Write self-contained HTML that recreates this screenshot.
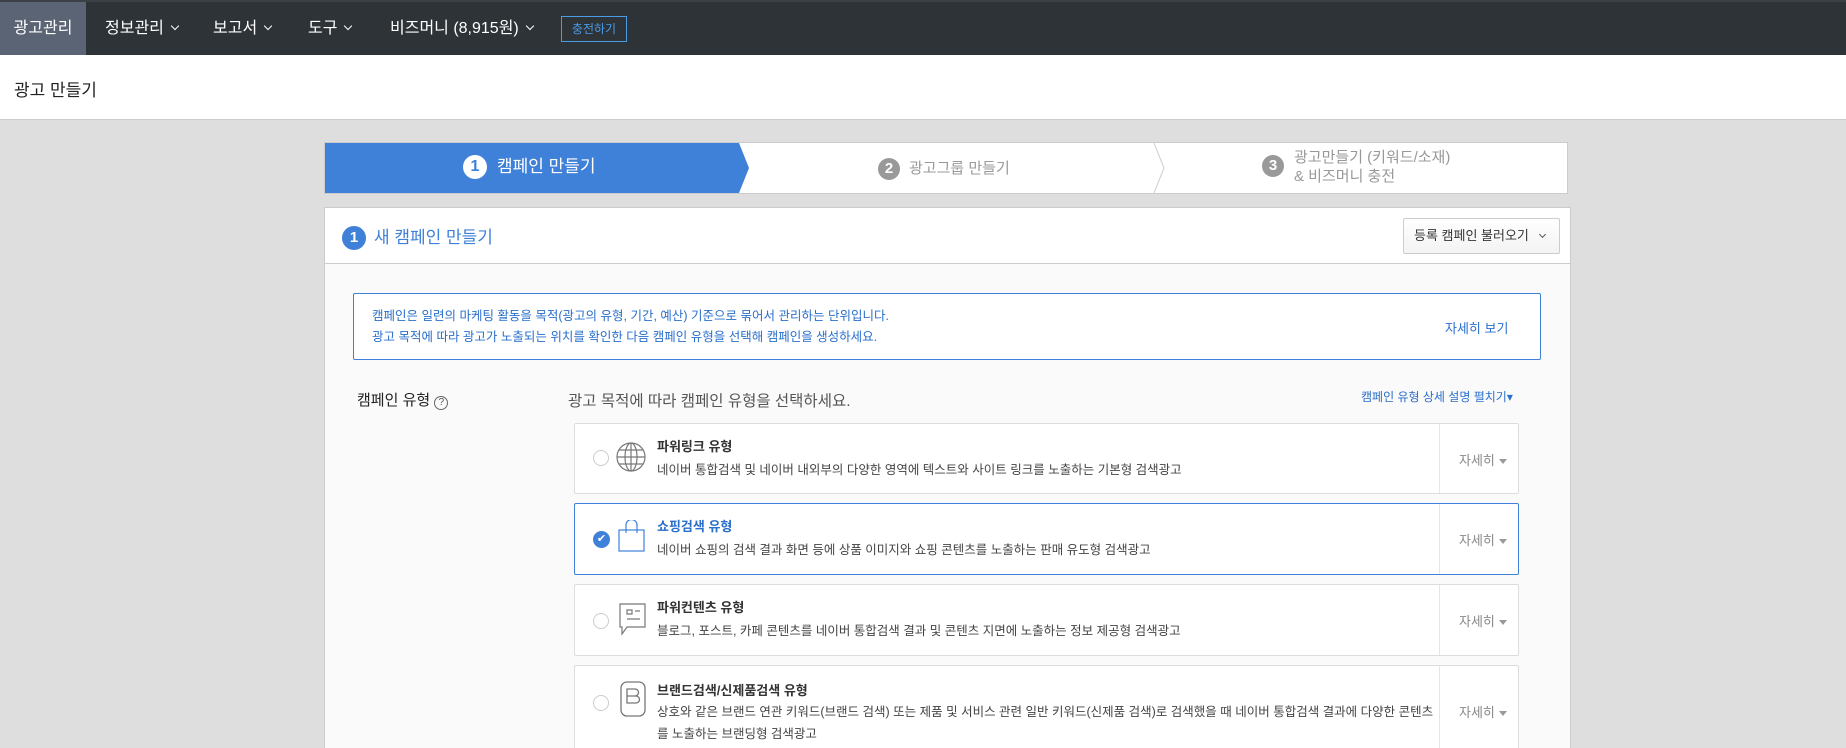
<!DOCTYPE html>
<html style="width:1846px;height:748px;overflow:hidden"><head><meta charset="utf-8"><style>
*{margin:0;padding:0;box-sizing:border-box}
body{width:1846px;height:748px;overflow:hidden;background:#dedede;font-family:"Liberation Sans","Noto Sans CJK KR",sans-serif;position:relative}
.a{position:absolute;white-space:nowrap}
.nav{position:absolute;left:0;top:0;width:1846px;height:55px;background:#2d3337;border-top:2px solid #3a4045}
.nav .i{position:absolute;top:0;height:53px;line-height:53px;color:#fff;font-size:16px}
.chev{display:inline-block;width:6px;height:6px;border-right:1.5px solid #fff;border-bottom:1.5px solid #fff;transform:rotate(45deg);margin-left:8px;position:relative;top:-4px}
.card{position:absolute;left:574px;width:945px;background:#fff;border:1px solid #ddd;border-radius:2px}
.card .sep{position:absolute;left:864px;top:0;bottom:0;border-left:1px solid #e6e6e6}
.card .det{position:absolute;left:884px;color:#888;font-size:13px}
.card .det:after{content:"";display:inline-block;border:4px solid transparent;border-top:5px solid #999;margin-left:4px;position:relative;top:3px}
.card .t{position:absolute;left:82px;font-size:13px;font-weight:bold;color:#333}
.card .d{position:absolute;left:82px;font-size:12.5px;color:#444;line-height:22px}
.radio{position:absolute;left:18px;width:16px;height:16px;border-radius:50%;border:1px solid #ccc;background:#fff}
svg{position:absolute}
</style></head><body>
<div class="nav">
<div class="i" style="left:0;width:86px;background:#5b6474;text-align:center">광고관리</div>
<div class="i" style="left:105px">정보관리<span class="chev"></span></div>
<div class="i" style="left:213px">보고서<span class="chev"></span></div>
<div class="i" style="left:308px">도구<span class="chev"></span></div>
<div class="i" style="left:390px">비즈머니 (8,915원)<span class="chev"></span></div>
<div class="a" style="left:561px;top:14px;width:66px;height:26px;border:1px solid #4a9be8;color:#4a9be8;font-size:12px;line-height:24px;text-align:center">충전하기</div>
</div>
<div class="a" style="left:0;top:55px;width:1846px;height:65px;background:#fff;border-bottom:1px solid #ccc"></div>
<div class="a" style="left:14px;top:76px;font-size:17px;color:#222">광고 만들기</div>

<div class="a" style="left:324px;top:142px;width:1244px;height:52px;background:#fff;border:1px solid #ccc"></div>
<svg style="left:324px;top:142px" width="1244" height="52"><polygon points="1,1 415,1 425,26 415,51 1,51" fill="#3f81d8"/><polyline points="830,1 840,26 830,51" fill="none" stroke="#ccc"/></svg>
<div class="a" style="left:463px;top:155px;width:24px;height:24px;border-radius:50%;background:#fff;color:#3f81d8;font-weight:bold;font-size:16px;text-align:center;line-height:24px">1</div>
<div class="a" style="left:497px;top:155px;color:#fff;font-size:17px;line-height:24px">캠페인 만들기</div>
<div class="a" style="left:878px;top:158px;width:22px;height:22px;border-radius:50%;background:#999;color:#fff;font-weight:bold;font-size:15px;text-align:center;line-height:22px">2</div>
<div class="a" style="left:909px;top:158px;color:#999;font-size:15px;line-height:22px">광고그룹 만들기</div>
<div class="a" style="left:1262px;top:155px;width:22px;height:22px;border-radius:50%;background:#999;color:#fff;font-weight:bold;font-size:15px;text-align:center;line-height:22px">3</div>
<div class="a" style="left:1294px;top:148px;color:#999;font-size:15px;line-height:19px">광고만들기 (키워드/소재)<br>&amp; 비즈머니 충전</div>

<div class="a" style="left:324px;top:207px;width:1247px;height:541px;background:#fafafa;border:1px solid #ccc;border-bottom:none"></div>
<div class="a" style="left:325px;top:208px;width:1245px;height:56px;background:#fff;border-bottom:1px solid #ccc"></div>
<div class="a" style="left:342px;top:226px;width:24px;height:24px;border-radius:50%;background:#3f81d8;color:#fff;font-weight:bold;font-size:15px;text-align:center;line-height:24px">1</div>
<div class="a" style="left:374px;top:226px;color:#3f81d8;font-size:17px;line-height:24px">새 캠페인 만들기</div>
<div class="a" style="left:1403px;top:218px;width:157px;height:36px;border:1px solid #ccc;border-radius:2px;background:linear-gradient(#fff,#f3f3f3);font-size:13px;color:#333;line-height:34px;padding-left:10px">등록 캠페인 불러오기 <span style="display:inline-block;width:5px;height:5px;border-right:1px solid #555;border-bottom:1px solid #555;transform:rotate(45deg);margin-left:8px;position:relative;top:-3px"></span></div>

<div class="a" style="left:353px;top:293px;width:1188px;height:67px;background:#fff;border:1px solid #3f81d8;border-radius:2px"></div>
<div class="a" style="left:372px;top:306px;color:#2a6fcb;font-size:12.5px;line-height:21px">캠페인은 일련의 마케팅 활동을 목적(광고의 유형, 기간, 예산) 기준으로 묶어서 관리하는 단위입니다.<br>광고 목적에 따라 광고가 노출되는 위치를 확인한 다음 캠페인 유형을 선택해 캠페인을 생성하세요.</div>
<div class="a" style="left:1445px;top:318px;color:#2a6fcb;font-size:13px">자세히 보기</div>

<div class="a" style="left:357px;top:389px;color:#222;font-size:15px">캠페인 유형 <span style="display:inline-block;width:14px;height:14px;border:1px solid #666;border-radius:50%;font-size:10px;text-align:center;line-height:12px;color:#555">?</span></div>
<div class="a" style="left:568px;top:389px;color:#555;font-size:15.5px">광고 목적에 따라 캠페인 유형을 선택하세요.</div>
<div class="a" style="left:1361px;top:388px;color:#2a6fcb;font-size:12px">캠페인 유형 상세 설명 펼치기▾</div>

<div class="card" style="top:423px;height:71px"><div class="radio" style="top:26px"></div><div class="t" style="top:12px">파워링크 유형</div><div class="d" style="top:35px">네이버 통합검색 및 네이버 내외부의 다양한 영역에 텍스트와 사이트 링크를 노출하는 기본형 검색광고</div><div class="sep"></div><div class="det" style="top:26px">자세히</div></div>
<svg style="left:615px;top:441px" width="32" height="32" fill="none" stroke="#777" stroke-width="1.2"><circle cx="16" cy="16" r="14"/><ellipse cx="16" cy="16" rx="6" ry="14"/><line x1="16" y1="2" x2="16" y2="30"/><line x1="2" y1="16" x2="30" y2="16"/><line x1="4" y1="9" x2="28" y2="9"/><line x1="4" y1="23" x2="28" y2="23"/></svg>

<div class="card" style="top:503px;height:72px;border-color:#3f81d8"><div style="position:absolute;left:18px;top:27px;width:17px;height:17px;border-radius:50%;background:#3f81d8;color:#fff;font-size:11px;text-align:center;line-height:17px">✔</div><div class="t" style="top:12px;color:#2a6fcb">쇼핑검색 유형</div><div class="d" style="top:35px">네이버 쇼핑의 검색 결과 화면 등에 상품 이미지와 쇼핑 콘텐츠를 노출하는 판매 유도형 검색광고</div><div class="sep"></div><div class="det" style="top:26px">자세히</div></div>
<svg style="left:617px;top:520px" width="30" height="34" fill="none" stroke="#3f81d8" stroke-width="1.2"><rect x="2" y="10" width="25" height="21"/><path d="M9 13V5a5.5 5.5 0 0 1 11 0v8"/></svg>

<div class="card" style="top:584px;height:72px"><div class="radio" style="top:28px"></div><div class="t" style="top:12px">파워컨텐츠 유형</div><div class="d" style="top:35px">블로그, 포스트, 카페 콘텐츠를 네이버 통합검색 결과 및 콘텐츠 지면에 노출하는 정보 제공형 검색광고</div><div class="sep"></div><div class="det" style="top:26px">자세히</div></div>
<svg style="left:618px;top:602px" width="30" height="34" fill="none" stroke="#777" stroke-width="1.2"><path d="M2 2h25v23H9l-5 7v-7H2z"/><path d="M9 8h5v4H9zM17 9h5M9 17h13"/></svg>

<div class="card" style="top:665px;height:83px;border-bottom:none;border-radius:2px 2px 0 0"><div class="radio" style="top:29px"></div><div class="t" style="top:14px">브랜드검색/신제품검색 유형</div><div class="d" style="top:35px">상호와 같은 브랜드 연관 키워드(브랜드 검색) 또는 제품 및 서비스 관련 일반 키워드(신제품 검색)로 검색했을 때 네이버 통합검색 결과에 다양한 콘텐츠<br>를 노출하는 브랜딩형 검색광고</div><div class="sep"></div><div class="det" style="top:36px">자세히</div></div>
<svg style="left:619px;top:680px" width="30" height="40" fill="none" stroke="#777" stroke-width="1.3"><rect x="2" y="2" width="24" height="34" rx="6"/><path d="M8 9h8a3 3 0 0 1 0 7H8zM8 16h9a3.5 3.5 0 0 1 0 7H8z"/></svg>
</body></html>
